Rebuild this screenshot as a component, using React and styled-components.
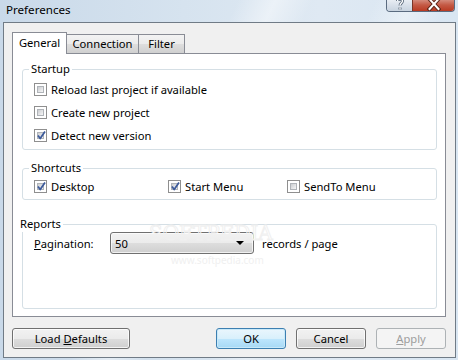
import React from "react";
import styled, { createGlobalStyle, css } from "styled-components";

const FONT = `"Noto Sans", "Open Sans", sans-serif`;
const FS = "11.2px";

const Global = createGlobalStyle`
  html, body { margin: 0; padding: 0; background: #d8e4f0; }
  body { font-family: ${FONT}; font-size: ${FS}; color: #000; }
  * { box-sizing: border-box; }
`;

const Window = styled.div`
  width: 458px;
  height: 360px;
  display: flex;
  flex-direction: column;
  overflow: hidden;
  background:
    linear-gradient(115deg, rgba(255,255,255,0) 0%, rgba(255,255,255,0) 38%, rgba(255,255,255,0.45) 44%, rgba(255,255,255,0) 50%, rgba(255,255,255,0) 60%, rgba(255,255,255,0.35) 66%, rgba(255,255,255,0) 72%),
    linear-gradient(90deg, #c9d9e9 0%, #d6e3ef 40%, #dfe9f3 70%, #d9e6f2 100%);
`;

const TitleBar = styled.div`
  height: 22px;
  flex: none;
  display: flex;
  justify-content: space-between;
  align-items: flex-start;
  padding: 0 3px 0 6px;
`;

const Title = styled.span`
  font-family: ${FONT};
  font-size: 11.6px;
  line-height: 19px;
  color: #000;
`;

const CaptionGroup = styled.div`
  display: flex;
  height: 12px;
  border: 1px solid #5a6b80;
  border-top: none;
  border-radius: 0 0 4px 4px;
  overflow: hidden;
`;

const CaptionButton = styled.div`
  height: 100%;
  display: flex;
  align-items: flex-end;
  justify-content: center;
  ${(p) =>
    p.$close
      ? css`
          width: 42px;
          background: linear-gradient(#d48a7b 0%, #c45a45 45%, #b93a22 100%);
          border-left: 1px solid #7a3526;
        `
      : css`
          width: 25px;
          background: linear-gradient(#e8edf3 0%, #d6dee8 55%, #c8d3df 100%);
        `}
`;

const Client = styled.div`
  flex: 1;
  margin: 0 2px 2px 3px;
  border: 1px solid #707b86;
  background: #f0f0f0;
  padding: 9px 9px 8px 8px;
  display: flex;
  flex-direction: column;
`;

const TabStrip = styled.div`
  height: 21px;
  display: flex;
  align-items: flex-end;
  flex: none;
`;

const Tab = styled.div`
  font-family: ${FONT};
  font-size: ${FS};
  width: ${(p) => p.$w}px;
  display: flex;
  align-items: center;
  justify-content: center;
  border: 1px solid #898c95;
  border-bottom: none;
  ${(p) =>
    p.$active
      ? css`
          height: 22px;
          margin-bottom: -1px;
          background: #fff;
          position: relative;
          z-index: 1;
          padding-bottom: 3px;
        `
      : css`
          height: 19px;
          margin-left: -1px;
          background: linear-gradient(#f3f3f3 0%, #ebebeb 50%, #dedede 51%, #d0d0d0 100%);
          padding-bottom: 1px;
        `}
`;

const Panel = styled.div`
  flex: 1;
  background: #fff;
  border: 1px solid #898c95;
  padding: 7px 8px 7px 9px;
  display: flex;
  flex-direction: column;
  position: relative;
`;

const Group = styled.fieldset`
  margin: 0 0 ${(p) => p.$mb || 0}px 0;
  border: 1px solid #d5dfe5;
  border-radius: 3px;
  padding: ${(p) => p.$pad};
  min-width: 0;
  ${(p) => p.$grow && css`flex: 1;`}
`;

const Legend = styled.legend`
  font-family: ${FONT};
  font-size: ${FS};
  line-height: 16px;
  padding: 0 2px;
  margin-left: -5px;
`;

const Stack = styled.div`
  display: flex;
  flex-direction: column;
  gap: 6px;
`;

const Columns = styled.div`
  display: grid;
  grid-template-columns: 134px 119px 1fr;
`;

const CheckRow = styled.label`
  height: 17px;
  display: flex;
  align-items: center;
  gap: 4px;
  font-family: ${FONT};
  font-size: ${FS};
  white-space: nowrap;
`;

const Box = styled.span`
  width: 13px;
  height: 13px;
  flex: none;
  border: 1px solid #8f8f8f;
  background: #fff;
  padding: 2px;
  display: flex;
  position: relative;
`;

const BoxInner = styled.span`
  flex: 1;
  border: 1px solid #b0b4b9;
  background: linear-gradient(135deg, #cbcdd0 0%, #e3e4e6 55%, #f6f6f6 100%);
`;

const CheckMark = styled.svg`
  position: absolute;
  left: 1px;
  top: 0px;
`;

function Checkbox({ checked, children }) {
  return (
    <CheckRow>
      <Box>
        <BoxInner />
        {checked && (
          <CheckMark width="11" height="11" viewBox="0 0 11 11">
            <path d="M2 5.5 L4.2 8.5 L9 1.5" fill="none" stroke="#3c5a9a" strokeWidth="1.8" strokeLinejoin="round" />
          </CheckMark>
        )}
      </Box>
      <span>{children}</span>
    </CheckRow>
  );
}

const FormRow = styled.div`
  height: 22px;
  display: flex;
  align-items: center;
  padding-left: 11px;
  font-family: ${FONT};
  font-size: ${FS};
`;

const FieldLabel = styled.span`
  width: 76px;
`;

const Combo = styled.div`
  width: 144px;
  height: 22px;
  border: 1px solid #707070;
  border-radius: 3px;
  background: linear-gradient(#f2f2f2 0%, #ebebeb 50%, #dddddd 51%, #cfcfcf 100%);
  box-shadow: inset 0 0 0 1px rgba(255,255,255,0.7);
  display: flex;
  align-items: center;
  justify-content: space-between;
  padding: 0 9px 0 4px;
  margin-right: 8px;
`;

const Arrow = styled.span`
  width: 0;
  height: 0;
  border-left: 4px solid transparent;
  border-right: 4px solid transparent;
  border-top: 4px solid #000;
`;

const Watermark = styled.div`
  position: absolute;
  left: 136px;
  top: 167px;
  font-family: "DejaVu Serif", serif;
  font-size: 20px;
  letter-spacing: 0px;
  color: transparent;
  -webkit-text-stroke: 1px #f0f0f0;
  pointer-events: none;
`;

const WatermarkUrl = styled.div`
  position: absolute;
  left: 158px;
  top: 199px;
  font-family: ${FONT};
  font-size: 10px;
  color: #f0f0f0;
  pointer-events: none;
`;

const ButtonRow = styled.div`
  margin-top: 11px;
  height: 21px;
  display: flex;
  gap: 10px;
  flex: none;
`;

const Spacer = styled.div`
  flex: 1;
`;

const Button = styled.div`
  width: ${(p) => p.$w}px;
  height: 21px;
  border-radius: 3px;
  display: flex;
  align-items: center;
  justify-content: center;
  font-family: ${FONT};
  font-size: ${FS};
  padding-bottom: 1px;
  ${(p) =>
    p.$default
      ? css`
          border: 1px solid #3c7fb1;
          background: linear-gradient(#eaf6fd 0%, #d9f0fc 50%, #bee6fd 51%, #a7d9f5 100%);
          box-shadow: inset 0 0 0 1px #c9e9f9;
        `
      : p.$disabled
      ? css`
          border: 1px solid #adb2b5;
          background: #f4f4f4;
          color: #9d9d9d;
        `
      : css`
          border: 1px solid #707070;
          background: linear-gradient(#f2f2f2 0%, #ebebeb 50%, #dddddd 51%, #cfcfcf 100%);
          box-shadow: inset 0 0 0 1px rgba(255,255,255,0.75);
        `}
`;

export default function App() {
  return (
    <>
      <Global />
      <Window>
        <TitleBar>
          <Title>Preferences</Title>
          <CaptionGroup>
            <CaptionButton>
              <svg width="12" height="11" viewBox="0 0 12 11">
                <path d="M3.5 1 C3.5 -1.5 8.5 -1.5 8.5 1 C8.5 3 6 3.2 6 5.5 M6 7.5 L6 9.5" fill="none" stroke="#5d6b7d" strokeWidth="3" />
                <path d="M3.5 1 C3.5 -1.5 8.5 -1.5 8.5 1 C8.5 3 6 3.2 6 5.5 M6 7.5 L6 9.5" fill="none" stroke="#ffffff" strokeWidth="1.3" />
              </svg>
            </CaptionButton>
            <CaptionButton $close>
              <svg width="14" height="11" viewBox="0 0 14 11">
                <path d="M2.5 -1 L11.5 9 M11.5 -1 L2.5 9" stroke="#5a2418" strokeWidth="4" strokeLinecap="square" />
                <path d="M2.5 -1 L11.5 9 M11.5 -1 L2.5 9" stroke="#ffffff" strokeWidth="2" strokeLinecap="square" />
              </svg>
            </CaptionButton>
          </CaptionGroup>
        </TitleBar>
        <Client>
          <TabStrip>
            <Tab $active $w={55}>General</Tab>
            <Tab $w={73}>Connection</Tab>
            <Tab $w={47}>Filter</Tab>
          </TabStrip>
          <Panel>
            <Group $mb={10} $pad="4px 11px 5px 11px">
              <Legend>Startup</Legend>
              <Stack>
                <Checkbox>Reload last project if available</Checkbox>
                <Checkbox>Create new project</Checkbox>
                <Checkbox checked>Detect new version</Checkbox>
              </Stack>
            </Group>
            <Group $mb={16} $pad="2px 11px 4px 11px">
              <Legend>Shortcuts</Legend>
              <Columns>
                <Checkbox checked>Desktop</Checkbox>
                <Checkbox checked>Start Menu</Checkbox>
                <Checkbox>SendTo Menu</Checkbox>
              </Columns>
            </Group>
            <Group $grow $pad="0 11px 0 0">
              <Legend>Reports</Legend>
              <FormRow>
                <FieldLabel><u>P</u>agination:</FieldLabel>
                <Combo>
                  <span>50</span>
                  <Arrow />
                </Combo>
                <span>records / page</span>
              </FormRow>
            </Group>
            <Watermark>SOFTPEDIA</Watermark>
            <WatermarkUrl>www.softpedia.com</WatermarkUrl>
          </Panel>
          <ButtonRow>
            <Button $w={118}><span>Load <u>D</u>efaults</span></Button>
            <Spacer />
            <Button $default $w={70}><span>OK</span></Button>
            <Button $w={70}><span>Cancel</span></Button>
            <Button $disabled $w={70}><span><u>A</u>pply</span></Button>
          </ButtonRow>
        </Client>
      </Window>
    </>
  );
}
